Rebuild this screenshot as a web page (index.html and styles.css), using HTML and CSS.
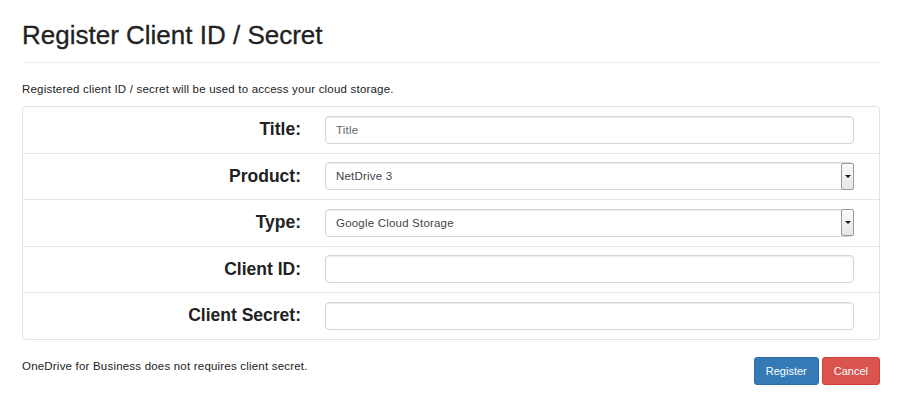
FILE: index.html
```html
<!DOCTYPE html>
<html lang="en">
<head>
    <meta charset="UTF-8">
    <title>Register Client ID / Secret</title>
    <link rel="stylesheet" href="styles.css">
</head>
<body>
    <div class="page-header">
        <h1>Register Client ID / Secret</h1>
    </div>
    <p class="intro">Registered client ID / secret will be used to access your cloud storage.</p>

    <div class="form-panel">
        <div class="form-row">
            <label class="form-label">Title:</label>
            <div class="form-field">
                <input class="text-input" type="text" placeholder="Title">
            </div>
        </div>
        <div class="form-row">
            <label class="form-label">Product:</label>
            <div class="form-field">
                <div class="select-box">
                    <span class="select-value">NetDrive 3</span>
                    <span class="select-btn"><span class="caret"></span></span>
                </div>
            </div>
        </div>
        <div class="form-row">
            <label class="form-label">Type:</label>
            <div class="form-field">
                <div class="select-box">
                    <span class="select-value">Google Cloud Storage</span>
                    <span class="select-btn"><span class="caret"></span></span>
                </div>
            </div>
        </div>
        <div class="form-row">
            <label class="form-label">Client ID:</label>
            <div class="form-field">
                <input class="text-input" type="text">
            </div>
        </div>
        <div class="form-row">
            <label class="form-label">Client Secret:</label>
            <div class="form-field">
                <input class="text-input" type="text">
            </div>
        </div>
    </div>

    <div class="form-footer">
        <p class="note">OneDrive for Business does not requires client secret.</p>
        <div class="actions">
            <button class="btn btn-primary">Register</button>
            <button class="btn btn-danger">Cancel</button>
        </div>
    </div>
</body>
</html>
```

FILE: styles.css
```css
body {
    margin: 0;
    padding: 0 22px;
    font-family: "Liberation Sans", Arial, sans-serif;
    color: #333;
    background: #fff;
}

.page-header {
    padding-top: 20px;
    padding-bottom: 12px;
    border-bottom: 1px solid #eee;
}
.page-header h1 {
    margin: 0;
    font-size: 26px;
    line-height: 30px;
    font-weight: 500;
    color: #222;
    -webkit-text-stroke: 0.3px #222;
}

.intro {
    margin: 19px 0 9px 0;
    font-size: 11.5px;
    letter-spacing: 0.2px;
    line-height: 15px;
    color: #222;
}

.form-panel {
    border: 1px solid #e3e3e3;
    border-radius: 3px;
}
.form-row {
    display: grid;
    grid-template-columns: 290px 1fr;
    align-items: center;
    height: 45.5px;
}
.form-row + .form-row {
    border-top: 1px solid #e5e5e5;
}
.form-label {
    text-align: right;
    padding-right: 12px;
    font-size: 17.5px;
    font-weight: bold;
    color: #222;
}
.form-field {
    padding: 0 25px 0 12px;
}

.text-input,
.select-box {
    box-sizing: border-box;
    width: 100%;
    height: 28px;
    border: 1px solid #d6d6d6;
    border-radius: 4px;
    box-shadow: inset 0 1px 1px rgba(0,0,0,0.08);
    background: #fff;
    font-family: inherit;
    font-size: 11.5px;
    letter-spacing: 0.2px;
    color: #444;
    padding: 0 10px;
    outline: none;
}
.text-input::placeholder {
    color: #666;
}

.select-box {
    display: flex;
    align-items: center;
    padding-right: 0;
}
.select-value {
    flex: 1;
}
.select-btn {
    box-sizing: border-box;
    width: 13px;
    height: 27px;
    margin-right: -1px;
    border: 1px solid #9a9a9a;
    border-radius: 2px;
    background: linear-gradient(#fafafa, #e6e6e6);
    display: flex;
    align-items: center;
    justify-content: center;
}
.caret {
    width: 0;
    height: 0;
    border-left: 3px solid transparent;
    border-right: 3px solid transparent;
    border-top: 3px solid #111;
}

.form-footer {
    display: flex;
    justify-content: space-between;
    align-items: flex-start;
    margin-top: 17px;
}
.note {
    margin: 2px 0 0 0;
    font-size: 11.5px;
    letter-spacing: 0.2px;
    line-height: 15px;
    color: #222;
}
.actions {
    display: flex;
    gap: 3px;
}
.btn {
    height: 28px;
    padding: 0 11px;
    border: 1px solid transparent;
    border-radius: 3px;
    font-family: inherit;
    font-size: 11px;
    color: #fff;
    cursor: pointer;
}
.btn-primary {
    background: #337ab7;
    border-color: #2e6da4;
}
.btn-danger {
    background: #d9534f;
    border-color: #d43f3a;
}
```
